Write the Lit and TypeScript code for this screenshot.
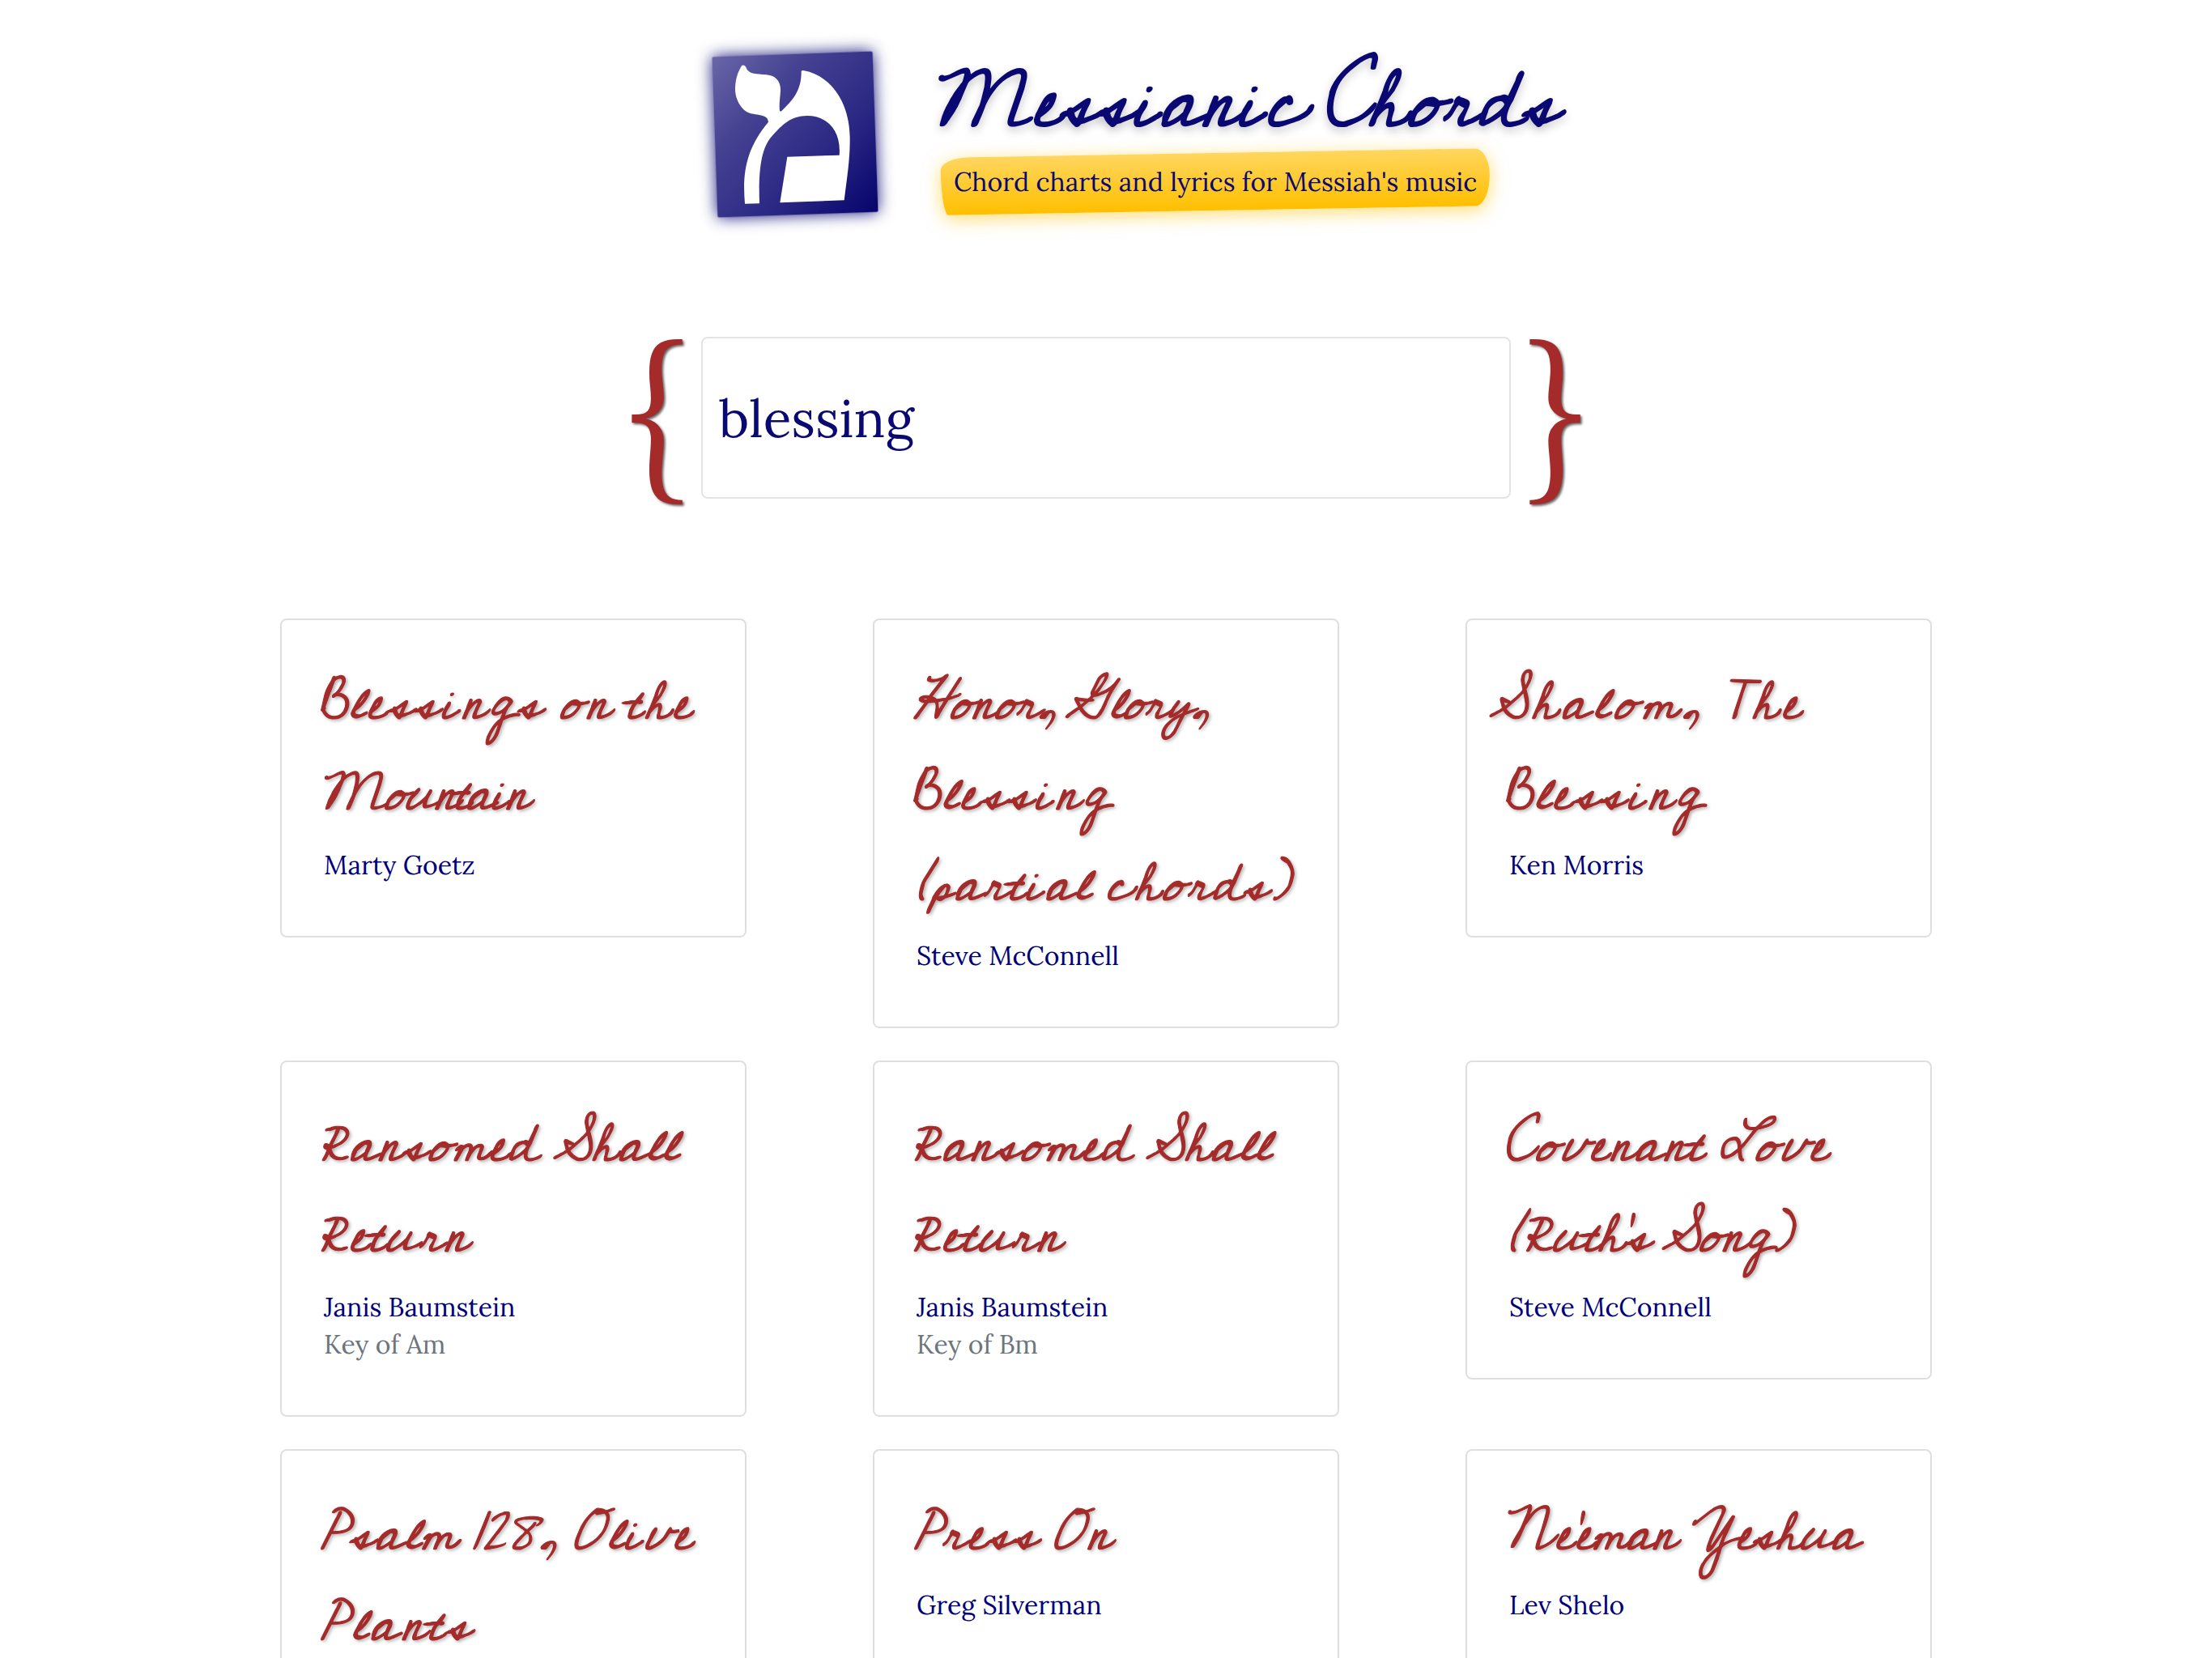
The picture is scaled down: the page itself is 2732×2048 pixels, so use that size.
import { LitElement, html, css, nothing } from "lit";
import { customElement, property, query } from "lit/decorators.js";

interface TitleLine {
  text: string;
  width: number;
  indent?: number;
}

interface Song {
  title: TitleLine[];
  author?: string;
  key?: string;
}

const songs: Song[] = [
  {
    title: [{ text: "Blessings on the", width: 462, indent: -4 }, { text: "Mountain", width: 264, indent: -6 }],
    author: "Marty Goetz",
  },
  {
    title: [
      { text: "Honor, Glory,", width: 366, indent: -1 },
      { text: "Blessing", width: 246, indent: -4 },
      { text: "(partial chords)", width: 460, indent: 4 },
    ],
    author: "Steve McConnell",
  },
  {
    title: [{ text: "Shalom, The", width: 386, indent: -22 }, { text: "Blessing", width: 246, indent: -4 }],
    author: "Ken Morris",
  },
  {
    title: [{ text: "Ransomed Shall", width: 446, indent: -5 }, { text: "Return", width: 188, indent: -6 }],
    author: "Janis Baumstein",
    key: "Key of Am",
  },
  {
    title: [{ text: "Ransomed Shall", width: 446, indent: -5 }, { text: "Return", width: 188, indent: -6 }],
    author: "Janis Baumstein",
    key: "Key of Bm",
  },
  {
    title: [{ text: "Covenant Love", width: 403, indent: -5 }, { text: "(Ruth's Song)", width: 349, indent: 3 }],
    author: "Steve McConnell",
  },
  {
    title: [{ text: "Psalm 128, Olive", width: 460, indent: -1 }, { text: "Plants", width: 186, indent: -1 }],
  },
  {
    title: [{ text: "Press On", width: 244, indent: 0 }],
    author: "Greg Silverman",
  },
  {
    title: [{ text: "Ne'eman Yeshua", width: 446, indent: -10 }],
    author: "Lev Shelo",
  },
];

/** One line of text whose letter spacing is tuned to span a given width. */
@customElement("fit-line")
export class FitLine extends LitElement {
  static styles = css`
    :host {
      display: block;
      white-space: nowrap;
    }
  `;

  @property() text = "";
  @property({ type: Number }) span = 0;
  @query("span") private line!: HTMLSpanElement;

  protected updated() {
    this.line.style.letterSpacing = "0px";
    const natural = this.line.getBoundingClientRect().width;
    const gaps = Math.max(1, this.text.length - 1);
    this.line.style.letterSpacing = `${((this.span - natural) / gaps).toFixed(3)}px`;
  }

  render() {
    return html`<span>${this.text}</span>`;
  }
}

@customElement("song-card")
export class SongCard extends LitElement {
  static styles = css`
    :host {
      display: block;
      box-sizing: border-box;
      width: 576px;
      border: 2px solid #dfdfdf;
      border-radius: 8px;
      padding: 47px 40px 64px 48px;
      background: #fff;
    }
    .title {
      margin: 0 0 9px;
      font: italic 400 65px/112px "Homemade Apple", "Cedarville Cursive", cursive;
      word-spacing: -14px;
      color: #a52a2a;
      -webkit-text-stroke: 1.1px #a52a2a;
      text-shadow: 2px 2px 4px rgba(0, 0, 0, 0.4);
    }
    .author,
    .key {
      margin-left: 4px;
      font: 400 32px/46px "Lora", "Liberation Serif", serif;
      color: #000078;
    }
    .key {
      color: #6c757d;
    }
  `;

  @property({ attribute: false }) song!: Song;

  render() {
    const s = this.song;
    return html`
      <div class="title">
        ${s.title.map(
          (l) => html`<fit-line
            .text=${l.text}
            .span=${l.width}
            style="margin-left:${l.indent ?? 0}px"
          ></fit-line>`
        )}
      </div>
      ${s.author ? html`<div class="author">${s.author}</div>` : nothing}
      ${s.key ? html`<div class="key">${s.key}</div>` : nothing}
    `;
  }
}

@customElement("app-root")
export class AppRoot extends LitElement {
  static styles = css`
    :host {
      display: block;
      box-sizing: border-box;
      width: 2732px;
      height: 2048px;
      overflow: hidden;
      background: #fff;
      font-family: "Lora", "Liberation Serif", serif;
      color: #0a0873;
    }
    .header {
      display: flex;
      height: 376px;
      padding: 40px 0 0 850px;
      box-sizing: border-box;
    }
    .logo {
      width: 261px;
      height: 250px;
      overflow: visible;
      flex: none;
    }
    .plate {
      filter: drop-shadow(0 0 28px rgba(10, 8, 115, 0.95));
    }
    .brand {
      margin-left: 46px;
      padding-top: 29px;
    }
    .name {
      margin: 0 0 0 -14px;
      font: italic 400 98px/115px "Homemade Apple", "Cedarville Cursive", cursive;
      word-spacing: -26px;
      -webkit-text-stroke: 2px #0a0873;
      text-shadow: 0 5px 12px rgba(0, 0, 0, 0.3);
    }
    .tagline {
      position: relative;
      width: 678px;
      height: 71px;
      margin-left: 5px;
      margin-top: 5px;
      padding: 16px 0 0 16px;
      box-sizing: border-box;
      font-size: 32px;
      line-height: 40px;
      white-space: nowrap;
      z-index: 0;
    }
    .tagline::before {
      content: "";
      position: absolute;
      inset: 0;
      z-index: -1;
      transform: rotate(-1deg);
      border-radius: 36px 18px 18px 9px / 16px 32px 40px 54px;
      background: linear-gradient(#ffd65f, #ffbf00);
      box-shadow: 0 5px 22px rgba(255, 193, 7, 0.55);
    }
    .search {
      display: flex;
      justify-content: center;
      align-items: center;
      height: 200px;
      margin-top: 40px;
    }
    .brace {
      width: 108px;
      flex: none;
      display: flex;
      justify-content: center;
      font-size: 198px;
      line-height: 200px;
      height: 200px;
      margin-top: -38px;
      color: #a52a2a;
      text-shadow: 2px 2px 3px rgba(0, 0, 0, 0.6);
    }
    .field {
      box-sizing: border-box;
      width: 1000px;
      height: 200px;
      border: 2px solid #e4e4e4;
      border-radius: 8px;
      padding: 2px 20px 0;
      outline: none;
      background: #fff;
      font: 400 64px "Lora", "Liberation Serif", serif;
      color: #0a0873;
    }
    .results {
      display: grid;
      grid-template-columns: repeat(3, 732px);
      justify-content: center;
      justify-items: center;
      align-items: start;
      row-gap: 40px;
      margin-top: 148px;
    }
  `;

  render() {
    return html`
      <header class="header">
        <svg class="logo" viewBox="0 0 783 750" aria-hidden="true">
          <defs>
            <linearGradient id="plate" x1="0" y1="0" x2="1" y2="1">
              <stop offset="0" stop-color="#6a66a8" />
              <stop offset="0.3" stop-color="#454292" />
              <stop offset="0.65" stop-color="#2b2884" />
              <stop offset="1" stop-color="#06036c" />
            </linearGradient>
          </defs>
          <rect
            class="plate"
            x="98.5"
            y="80.5"
            width="595"
            height="595"
            rx="6"
            fill="url(#plate)"
            transform="rotate(-2 396 378)"
          />
          <path
            fill="#fff"
            d="M205 122C212 122 215 130 218 138C232 155 248 153 290 157C325 160 343 182 342 215C341 240 336 265 339 290Q342 295 346 291C385 255 421 215 419 144Q422 139 430 142C520 158 598 250 599 390C600 470 588 540 578 622L340 631L367 461L560 455C568 360 510 308 440 309C380 310 350 340 310 385C270 430 260 510 264 634L210 635C200 520 215 430 297 332C295 305 265 308 230 300C200 292 172 250 174 205C176 160 190 138 197 125Q200 121 205 122Z"
          />
        </svg>
        <div class="brand">
          <h1 class="name"><fit-line .text=${"Messianic Chords"} .span=${782}></fit-line></h1>
          <div class="tagline">Chord charts and lyrics for Messiah's music</div>
        </div>
      </header>
      <div class="search">
        <span class="brace">{</span>
        <input class="field" type="text" value="blessing" aria-label="Search" />
        <span class="brace">}</span>
      </div>
      <main class="results">
        ${songs.map((song) => html`<song-card .song=${song}></song-card>`)}
      </main>
    `;
  }
}
